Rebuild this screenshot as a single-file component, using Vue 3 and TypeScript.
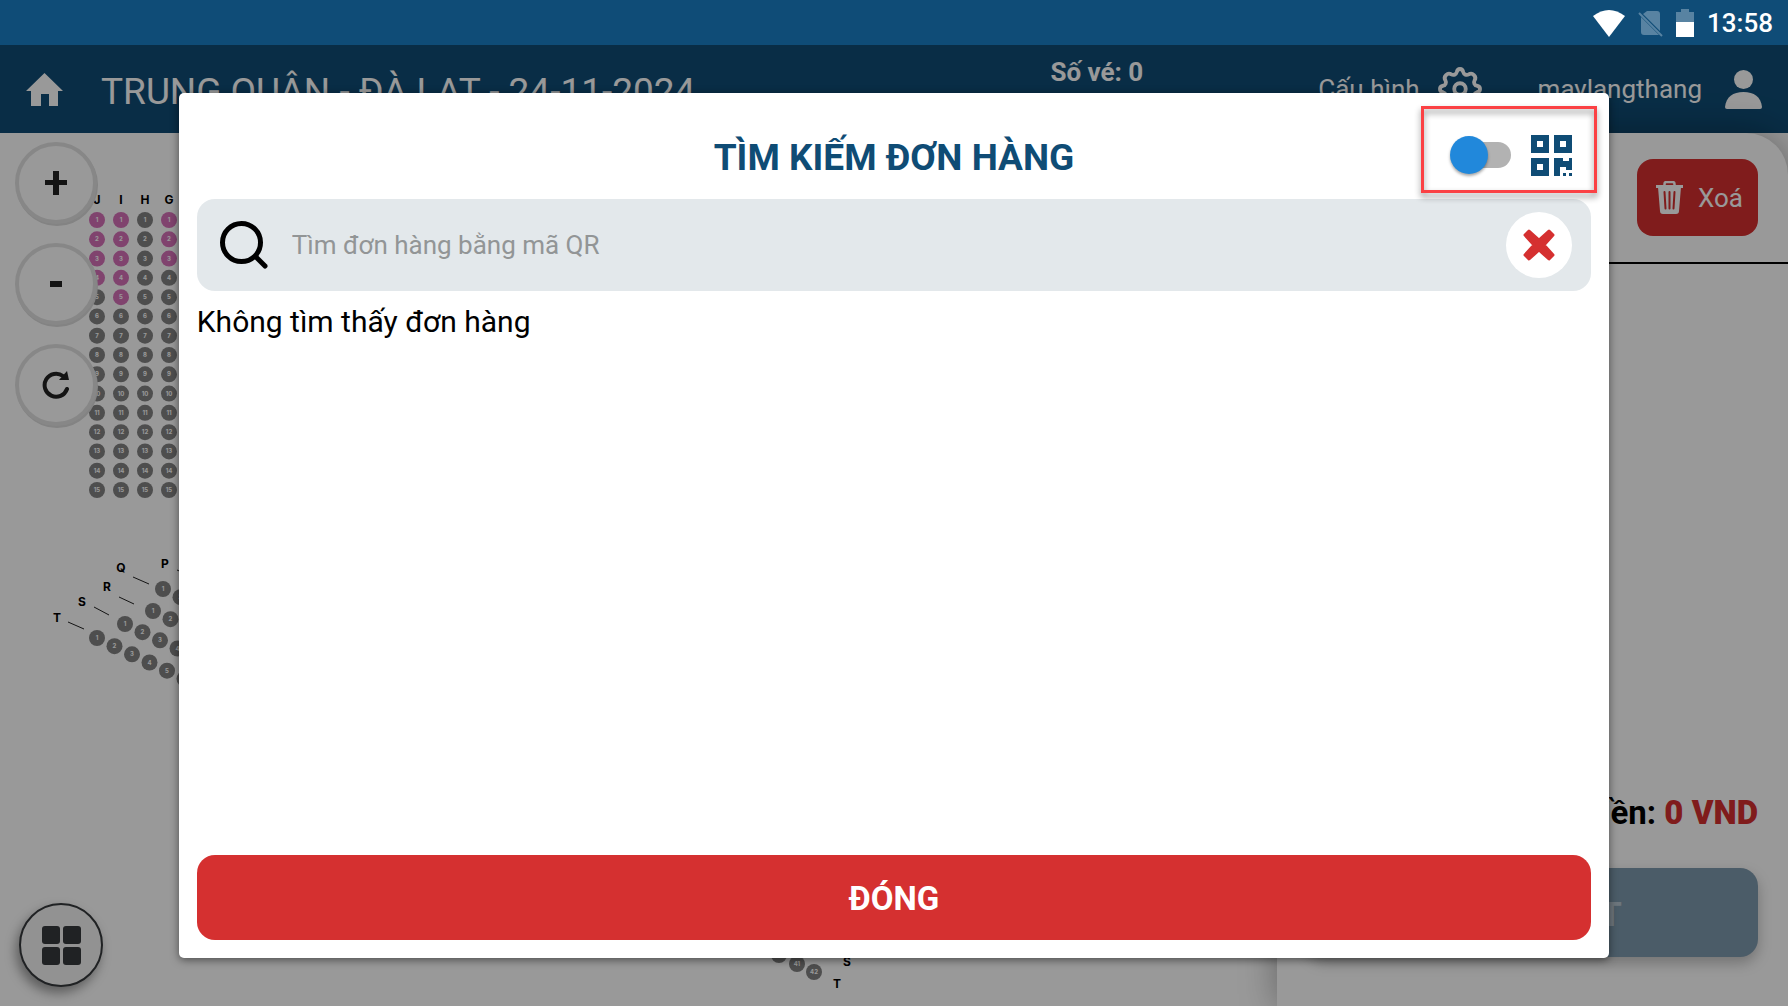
<script setup lang="ts">
import { computed, ref } from 'vue'

interface Seat {
  x: number
  y: number
  no: number
  sold: boolean
}
interface RowLabel {
  text: string
  x: number
  y: number
}

const query = ref('')
const scanMode = ref(false)

const columns = [
  { name: 'J', x: 97, sold: 4 },
  { name: 'I', x: 121, sold: 5 },
  { name: 'H', x: 145, sold: 0 },
  { name: 'G', x: 169, sold: 3 },
]
const slanted = [
  { name: 'P', lx: 165, ly: 431, x: 192, y: 448, first: 1, count: 1 },
  { name: 'Q', lx: 121, ly: 435, x: 163, y: 456, first: 1, count: 2 },
  { name: 'R', lx: 107, ly: 454, x: 153, y: 478, first: 1, count: 2 },
  { name: 'S', lx: 82, ly: 469, x: 125, y: 491, first: 1, count: 4 },
  { name: 'T', lx: 57, ly: 485, x: 97, y: 505, first: 1, count: 6 },
]

const seats = computed<Seat[]>(() => {
  const list: Seat[] = []
  for (const c of columns) {
    for (let i = 0; i < 15; i++) {
      list.push({ x: c.x, y: 87 + (i * 270) / 14, no: i + 1, sold: i < c.sold })
    }
  }
  for (const r of slanted) {
    for (let i = 0; i < r.count; i++) {
      list.push({ x: r.x + (i * 35) / 2, y: r.y + (i * 49) / 6, no: r.first + i, sold: false })
    }
  }
  list.push({ x: 779, y: 822, no: 40, sold: false })
  list.push({ x: 797, y: 831, no: 41, sold: false })
  list.push({ x: 814, y: 839, no: 42, sold: false })
  return list
})

const labels = computed<RowLabel[]>(() => [
  ...columns.map((c) => ({ text: c.name, x: c.x, y: 71 })),
  ...slanted.map((r) => ({ text: r.name, x: r.lx, y: r.ly + 4 })),
  { text: 'S', x: 847, y: 833 },
  { text: 'T', x: 837, y: 855 },
])
</script>

<template>
  <div class="screen">
    <div class="status">
      <svg width="32" height="27" viewBox="0 0 32 27"><path d="M0 6Q16-6 32 6L16 27z" fill="#fff" /></svg>
      <svg width="25" height="27" viewBox="0 0 25 27">
        <path d="M9 1h10q3 0 3 3v17L5 4zM3 7l18 18H6q-3 0-3-3z" fill="#5883a2" />
        <path d="M1 3l23 23" stroke="#5883a2" stroke-width="2" />
      </svg>
      <svg width="18" height="28" viewBox="0 0 18 28">
        <path d="M0 14V3h5V0h8v3h5v11z" fill="#5883a2" />
        <path d="M0 13h18v15H0z" fill="#fff" />
      </svg>
      <time>13:58</time>
    </div>

    <div class="app">
      <header class="bar">
        <a href="#" class="home" aria-label="Trang chủ">
          <svg width="37" height="33" viewBox="0 0 37 33"><path d="M18.500 0L37 18h-5v15h-9V21h-8v12H5V18H0z" fill="#fff" /></svg>
        </a>
        <h1>TRUNG QUÂN - ĐÀ LẠT - 24-11-2024</h1>
        <p class="count">Số vé: 0</p>
        <a href="#" class="config">
          Cấu hình
          <svg width="46" height="46" viewBox="0 0 24 24" fill="none" stroke="#fff" stroke-width="2" stroke-linejoin="round">
            <path d="M10.300 3.200C10.700 1 13.300 1 13.700 3.200A1.900 1.900 0 0 0 16.500 4.400C18.500 3.100 20.900 5.500 19.600 7.500A1.900 1.900 0 0 0 20.800 10.300C23 10.700 23 13.300 20.800 13.700A1.900 1.900 0 0 0 19.600 16.500C20.900 18.500 18.500 20.900 16.500 19.600A1.900 1.900 0 0 0 13.700 20.800C13.300 23 10.700 23 10.300 20.800A1.900 1.900 0 0 0 7.500 19.600C5.500 20.900 3.100 18.500 4.400 16.500A1.900 1.900 0 0 0 3.200 13.700C1 13.300 1 10.700 3.200 10.300A1.900 1.900 0 0 0 4.400 7.500C3.100 5.500 5.500 3.100 7.500 4.400A1.900 1.900 0 0 0 10.300 3.200z" />
            <circle cx="12" cy="12" r="3" />
          </svg>
        </a>
        <a href="#" class="user">
          maylangthang
          <svg width="37" height="39" viewBox="0 0 37 39" fill="#fff">
            <ellipse cx="18.500" cy="9.500" rx="9.500" ry="9.500" />
            <path d="M0 37C1 27 8 22 18.500 22S36 27 37 37q0 2-2 2H2q-2 0-2-2z" />
          </svg>
        </a>
      </header>

      <main class="body">
        <section class="map">
          <svg class="plan" width="900" height="874" viewBox="0 0 900 874">
            <g stroke="#222" stroke-width="1">
              <path d="M133 444l16 7M119 464l15 7M94 474l15 8M68 489l16 7M177 437l16 7" />
            </g>
            <text v-for="(l, i) in labels" :key="'l' + i" :x="l.x" :y="l.y" class="row-label">{{ l.text }}</text>
            <g v-for="(s, i) in seats" :key="i">
              <circle :cx="s.x" :cy="s.y" r="8" :class="s.sold ? 'sold' : 'free'" />
              <text :x="s.x" :y="s.y + 2" class="seat-no">{{ s.no }}</text>
            </g>
          </svg>
          <div class="tools">
            <button type="button" aria-label="Phóng to">
              <svg width="22" height="24" viewBox="0 0 22 24"><path d="M8 0h6v9h8v5h-8v10H8V14H0V9h8z" fill="#222" /></svg>
            </button>
            <button type="button" aria-label="Thu nhỏ">
              <svg width="12" height="6" viewBox="0 0 12 6"><path d="M0 0h12v6H0z" fill="#222" /></svg>
            </button>
            <button type="button" aria-label="Tải lại">
              <svg width="28" height="28" viewBox="0 0 28 28">
                <path d="M21 5A11.500 11.500 0 1 0 25 18" fill="none" stroke="#222" stroke-width="4" stroke-linecap="round" />
                <path d="M25 0l2 9H17z" fill="#222" />
              </svg>
            </button>
          </div>
          <button type="button" class="menu" aria-label="Danh mục">
            <svg width="39" height="39" viewBox="0 0 39 39" fill="#36393c">
              <rect width="18" height="18" rx="3" /><rect x="21" width="18" height="18" rx="3" />
              <rect y="21" width="18" height="18" rx="3" /><rect x="21" y="21" width="18" height="18" rx="3" />
            </svg>
          </button>
        </section>

        <aside class="order">
          <div class="order-head">
            <button type="button" class="clear">
              <svg width="27" height="33" viewBox="0 0 27 33">
                <path d="M8.500 5V3q0-2 2-2h6q2 0 2 2v2" fill="none" stroke="#fff" stroke-width="2.500" />
                <path d="M0 4h27v3H0z" fill="#fff" />
                <path d="M2 6h23l-2 24q0 3-3 3H7q-3 0-3-3z" fill="#fff" />
                <path d="M8.500 11l1 16.500M13.500 11v16.500M18.500 11l-1 16.500" stroke="#d53030" stroke-width="2" stroke-linecap="round" />
              </svg>
              Xoá
            </button>
          </div>
          <p class="total">Tổng tiền: <strong>0 VND</strong></p>
          <button type="button" class="submit">HOÀN TẤT</button>
        </aside>
      </main>

      <div class="overlay">
        <section class="dialog" role="dialog" aria-labelledby="dialog-title">
          <div class="dialog-head">
            <h2 id="dialog-title">TÌM KIẾM ĐƠN HÀNG</h2>
            <div class="mode">
              <input v-model="scanMode" type="checkbox" class="switch" aria-label="Quét mã QR" />
              <svg width="41" height="41" viewBox="0 0 41 41" fill="#0f4c75" fill-rule="evenodd">
                <path d="M0 0h18v18H0zM6 6v6h6V6z" />
                <path d="M23 0h18v18H23zM29 6v6h6V6z" />
                <path d="M0 23h18v18H0zM6 29v6h6v-6z" />
                <path d="M23 23h9v3h6v-3h3v12h-6v-3h-6v9h-6z" />
                <path d="M32 38h3v3h-3zM38 38h3v3h-3z" />
              </svg>
              <span class="frame"></span>
            </div>
          </div>

          <label class="search">
            <svg width="48" height="48" viewBox="0 0 48 48" fill="none" stroke="#000" stroke-width="5" stroke-linecap="round">
              <circle cx="21.500" cy="21.500" r="19" />
              <path d="M36 36l9 9" />
            </svg>
            <input v-model="query" type="text" placeholder="Tìm đơn hàng bằng mã QR" aria-label="Tìm đơn hàng" />
            <button type="button" class="reset" aria-label="Xoá tìm kiếm" @click="query = ''">
              <svg width="32" height="32" viewBox="0 0 32 32">
                <path
                  d="M6 2L16 11L26 2L30 6L21 16L30 26L26 30L16 21L6 30L2 26L11 16L2 6z"
                  fill="#d53030" stroke="#d53030" stroke-width="3" stroke-linejoin="round"
                />
              </svg>
            </button>
          </label>

          <p class="empty">Không tìm thấy đơn hàng</p>
          <button type="button" class="close">ĐÓNG</button>
        </section>
      </div>
    </div>
  </div>
</template>

<style>
body {
  margin: 0;
}
</style>

<style scoped>
.screen {
  display: flex;
  flex-direction: column;
  height: 100vh;
  overflow: hidden;
  font-family: Roboto, "Noto Sans", sans-serif;
  color: #000;
}
.screen * {
  box-sizing: border-box;
}
h1,
h2,
p {
  margin: 0;
}
button {
  border: 0;
  padding: 0;
  font-family: inherit;
  cursor: pointer;
}
svg {
  flex: none;
}

.status {
  display: flex;
  align-items: center;
  justify-content: flex-end;
  gap: 13px;
  flex: none;
  height: 45px;
  padding: 1px 15px 0 0;
  background: #0f4c77;
  color: #fff;
  font-size: 26px;
  font-weight: 500;
}

.app {
  position: relative;
  display: flex;
  flex-direction: column;
  flex: 1;
  min-height: 0;
}
.bar {
  display: flex;
  align-items: center;
  flex: none;
  height: 88px;
  padding: 0 26px;
  background: #0f4c75;
  color: #fff;
  font-size: 26px;
}
.bar a {
  display: flex;
  align-items: center;
  color: inherit;
  text-decoration: none;
}
.bar h1 {
  flex: 1;
  margin-left: 38px;
  padding-top: 4px;
  font-size: 37px;
  font-weight: 400;
  white-space: nowrap;
}
.count {
  align-self: flex-start;
  margin: 12px 175px 0 0;
  font-size: 26px;
  font-weight: 700;
}
.config {
  gap: 17px;
  margin-right: 55px;
}
.user {
  gap: 23px;
}

.body {
  display: grid;
  grid-template-columns: 5fr 2fr;
  flex: 1;
  min-height: 0;
  background: #fff;
}
.map {
  position: relative;
  min-width: 0;
  overflow: hidden;
}
.plan {
  position: absolute;
  top: 0;
  left: 0;
}
.row-label {
  font: 700 12px Inter, sans-serif;
  text-anchor: middle;
}
.seat-no {
  font: 700 6px Inter, sans-serif;
  fill: #fff;
  text-anchor: middle;
}
.sold {
  fill: #d670b8;
}
.free {
  fill: #828282;
}
.tools {
  position: absolute;
  top: 9px;
  left: 15px;
  display: flex;
  flex-direction: column;
  gap: 19px;
}
.tools button {
  display: grid;
  place-items: center;
  width: 82px;
  height: 82px;
  border: 4px solid #e2e2e2;
  border-radius: 50%;
  background: #fff;
  box-shadow: 1px 2px 0 #dadada;
}
.menu {
  position: absolute;
  bottom: 19px;
  left: 19px;
  display: grid;
  place-items: center;
  width: 84px;
  height: 84px;
  border: 2px solid #36393c;
  border-radius: 50%;
  background: #f3f3f3;
  box-shadow: -3px 6px 12px rgba(0, 0, 0, 0.4);
}

.order {
  position: relative;
  display: flex;
  flex-direction: column;
  border-top-right-radius: 42px;
  background: #fff;
  box-shadow: 0 0 36px rgba(0, 0, 0, 0.35);
}
.order-head {
  display: flex;
  justify-content: flex-end;
  padding: 26px 30px;
  border-bottom: 2px solid #000;
}
.clear {
  display: flex;
  align-items: center;
  justify-content: flex-end;
  gap: 15px;
  width: 121px;
  height: 77px;
  padding-right: 15px;
  border-radius: 16px;
  background: #d53030;
  color: #fff;
  font-size: 26px;
}
.total {
  margin: auto 30px 33px;
  font-size: 33px;
  line-height: 44px;
  font-weight: 700;
  text-align: right;
}
.total strong {
  color: #d53030;
}
.submit {
  margin: 0 30px 49px;
  height: 89px;
  padding: 3px 0 0 16px;
  border-radius: 18px;
  background: #7d99ad;
  box-shadow: 0 6px 14px rgba(0, 0, 0, 0.25);
  color: #b6c5d0;
  font-size: 34px;
  font-weight: 700;
}

.overlay {
  position: absolute;
  inset: 0;
  display: flex;
  align-items: center;
  justify-content: center;
  background: rgba(0, 0, 0, 0.4);
}
.dialog {
  display: flex;
  flex-direction: column;
  width: 80%;
  height: 90%;
  padding: 18px;
  border-radius: 5px;
  background: #fff;
  box-shadow: 0 2px 8px rgba(0, 0, 0, 0.5);
}
.dialog-head {
  display: grid;
  grid-template-columns: 1fr auto 1fr;
  align-items: center;
  flex: none;
  height: 88px;
}
.dialog-head h2 {
  grid-column: 2;
  padding-top: 5px;
  color: #0f4c75;
  font-size: 37px;
  line-height: 44px;
  font-weight: 700;
}
.mode {
  position: relative;
  display: flex;
  align-items: center;
  justify-self: end;
  gap: 19px;
  margin-right: 19px;
}
.switch {
  position: relative;
  width: 62px;
  height: 38px;
  margin: 0;
  appearance: none;
}
.switch::before {
  content: "";
  position: absolute;
  inset: 6px 1px 6px 6px;
  border-radius: 13px;
  background: #b2b2b2;
}
.switch::after {
  content: "";
  position: absolute;
  top: 0;
  left: 0;
  width: 38px;
  height: 38px;
  border-radius: 50%;
  background: #2188db;
  box-shadow: 0 2px 3px rgba(0, 0, 0, 0.35);
}
.switch:checked::after {
  left: 24px;
}
.frame {
  position: absolute;
  inset: -29px -25px -17px -29px;
  border: 3px solid #fb4144;
  filter: drop-shadow(0 4px 3px rgba(0, 0, 0, 0.45));
  pointer-events: none;
}
.search {
  display: flex;
  align-items: center;
  flex: none;
  height: 92px;
  padding: 0 19px 0 23px;
  border-radius: 18px;
  background: #e3e8eb;
}
.search input {
  flex: 1;
  min-width: 0;
  height: 60px;
  margin: 0 20px 0 24px;
  padding: 0;
  border: 0;
  outline: 0;
  background: none;
  font-family: inherit;
  font-size: 26px;
}
.search input::placeholder {
  color: #929596;
}
.reset {
  display: grid;
  place-items: center;
  width: 66px;
  height: 66px;
  border-radius: 50%;
  background: #fff;
}
.empty {
  margin-top: 13px;
  font-size: 30px;
  line-height: 36px;
}
.close {
  flex: none;
  height: 85px;
  margin-top: auto;
  padding-top: 3px;
  border-radius: 18px;
  background: #d53030;
  color: #fff;
  font-size: 33px;
  font-weight: 700;
}
</style>
